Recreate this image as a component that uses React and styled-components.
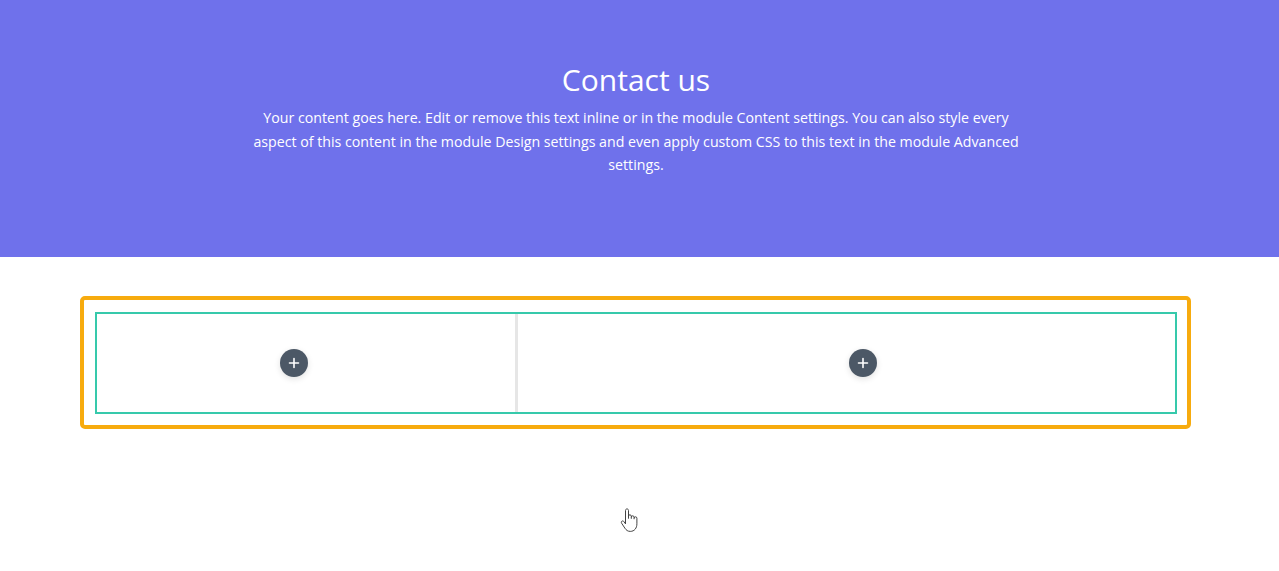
import React from "react";
import styled, { createGlobalStyle } from "styled-components";

const Global = createGlobalStyle`
  html, body { margin: 0; padding: 0; background: #fff; }
  body { font-family: "Open Sans", "Liberation Sans", sans-serif; }
`;

const Page = styled.div`
  position: relative;
  width: 1279px;
  height: 571px;
  overflow: hidden;
  background: #fff;
`;

const Hero = styled.section`
  background: #6f71eb;
  height: 257px;
  box-sizing: border-box;
  padding-top: 60px;
`;

const HeroInner = styled.div`
  width: 1272px;
  display: flex;
  flex-direction: column;
  align-items: center;
`;

const Title = styled.h1`
  margin: 0 0 6px;
  font-size: 30px;
  line-height: 40px;
  font-weight: 400;
  color: #fff;
`;

const Text = styled.p`
  margin: 0;
  width: 775px;
  text-align: center;
  font-size: 14.2px;
  line-height: 23.5px;
  color: #fff;
`;

const Section = styled.section`
  width: 1271px;
  padding-top: 39px;
  display: flex;
  justify-content: center;
`;

const Row = styled.div`
  width: 1111px;
  box-sizing: border-box;
  border: 4px solid #f7ab0e;
  border-radius: 5px;
  padding: 12px 10px 11px 11px;
`;

const Module = styled.div`
  height: 102px;
  box-sizing: border-box;
  border: 2px solid #36c9ab;
  display: grid;
  grid-template-columns: 394px 60px 1fr;
`;

const Column = styled.div`
  display: flex;
  align-items: center;
  justify-content: center;
`;

const Gutter = styled.div`
  display: flex;
  justify-content: flex-start;
  padding-left: 24px;
`;

const Divider = styled.div`
  width: 3px;
  background: #e6e6e6;
`;

const AddButton = styled.button`
  width: 28px;
  height: 28px;
  border-radius: 50%;
  border: none;
  padding: 0;
  background: #4c5866;
  box-shadow: 0 2px 6px rgba(0, 0, 0, 0.12);
  display: flex;
  align-items: center;
  justify-content: center;
`;

const Cursor = styled.svg`
  position: absolute;
  left: 620px;
  top: 508px;
`;

const Plus = () => (
  <svg width="12" height="12" viewBox="0 0 12 12">
    <path d="M6 1.5v9M1.5 6h9" stroke="#fff" strokeWidth="1.6" strokeLinecap="round" />
  </svg>
);

export default function App() {
  return (
    <Page>
      <Global />
      <Hero>
        <HeroInner>
          <Title>Contact us</Title>
          <Text>
            Your content goes here. Edit or remove this text inline or in the module Content settings. You can also style every aspect of this content in the module Design settings and even apply custom CSS to this text in the module Advanced settings.
          </Text>
        </HeroInner>
      </Hero>
      <Section>
        <Row>
          <Module>
            <Column>
              <AddButton aria-label="Add module"><Plus /></AddButton>
            </Column>
            <Gutter>
              <Divider />
            </Gutter>
            <Column>
              <AddButton aria-label="Add module"><Plus /></AddButton>
            </Column>
          </Module>
        </Row>
      </Section>
      <Cursor width="20" height="26" viewBox="0 0 20 26">
        <path
          d="M5.5 2.5c0-1 .7-1.6 1.5-1.6s1.5.6 1.5 1.6v8.2M8.5 8.2c0-.9.6-1.4 1.4-1.4s1.4.5 1.4 1.4v2.6M11.3 9.2c0-.9.6-1.4 1.4-1.4s1.4.5 1.4 1.4v2M14.1 10.2c0-.9.6-1.4 1.4-1.4s1.4.5 1.4 1.4v5.6c0 4.2-2.4 7.6-6.6 7.6-2.6 0-4-1.2-5.4-3.2L1.6 15.2c-.5-.8-.3-1.7.4-2.1.7-.4 1.5-.1 2 .6l1.5 2.2V2.5"
          fill="#fff"
          stroke="#444"
          strokeWidth="1"
          strokeLinejoin="round"
        />
      </Cursor>
    </Page>
  );
}
